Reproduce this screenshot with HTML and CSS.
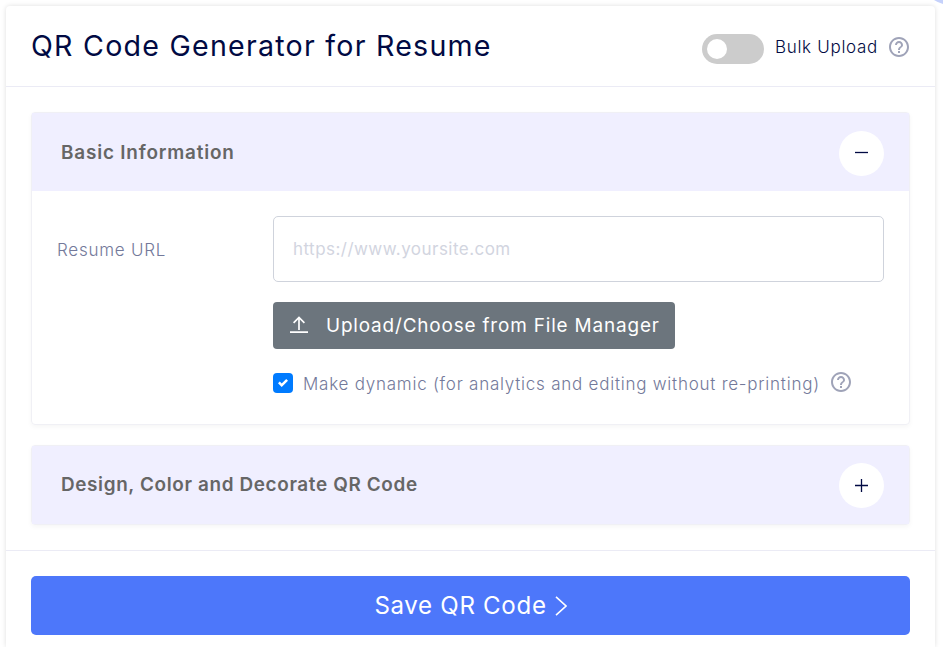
FILE: index.html
```
<!DOCTYPE html>
<html lang="en">
<head>
<meta charset="utf-8">
<title>QR Code Generator for Resume</title>
<link rel="stylesheet" href="styles.css">
</head>
<body>
<svg class="corner" viewBox="0 0 9 4"><path d="M0 0H9V4Q4 2.6 0 0Z" fill="#c5d1fb"/></svg>
<main class="card">
  <header class="card-head">
    <h1 class="title">QR Code Generator for Resume</h1>
    <div class="bulk">
      <span class="toggle"></span>
      <span class="bulk-label">Bulk Upload</span>
      <svg class="help" viewBox="0 0 24 24"><path d="M11 18h2v-2h-2v2zm1-16C6.480 2 2 6.480 2 12s4.480 10 10 10 10-4.480 10-10S17.520 2 12 2zm0 18c-4.410 0-8-3.590-8-8s3.590-8 8-8 8 3.590 8 8-3.590 8-8 8zm0-14c-2.210 0-4 1.790-4 4h2c0-1.100.9-2 2-2s2 .9 2 2c0 2-3 1.750-3 5h2c0-2.250 3-2.500 3-5 0-2.210-1.790-4-4-4z"/></svg>
    </div>
  </header>
  <div class="card-body">
    <section class="panel">
      <div class="panel-head expanded">
        <h2 class="panel-title">Basic Information</h2>
        <span class="round"><svg viewBox="0 0 13 13"><path d="M0 6.500H13"/></svg></span>
      </div>
      <div class="panel-content">
        <label class="field-label" for="url">Resume URL</label>
        <div class="field">
          <input class="input" id="url" type="text" placeholder="https://www.yoursite.com">
          <button class="upload" type="button">
            <svg viewBox="0 0 18 18"><path d="M9 14V2M3.600 6.800L9 1.400L14.400 6.800M0 16.200H18"/></svg>
            <span>Upload/Choose from File Manager</span>
          </button>
          <div class="check-row">
            <span class="checkbox"><svg viewBox="0 0 8 8"><path fill="#fff" d="M6.564.75l-3.590 3.612-1.538-1.550L0 4.260 2.974 7.250 8 2.193z"/></svg></span>
            <span class="check-label">Make dynamic (for analytics and editing without re-printing)</span>
            <svg class="help" viewBox="0 0 24 24"><path d="M11 18h2v-2h-2v2zm1-16C6.480 2 2 6.480 2 12s4.480 10 10 10 10-4.480 10-10S17.520 2 12 2zm0 18c-4.410 0-8-3.590-8-8s3.590-8 8-8 8 3.590 8 8-3.590 8-8 8zm0-14c-2.210 0-4 1.790-4 4h2c0-1.100.9-2 2-2s2 .9 2 2c0 2-3 1.750-3 5h2c0-2.250 3-2.500 3-5 0-2.210-1.790-4-4-4z"/></svg>
          </div>
        </div>
      </div>
    </section>
    <section class="panel">
      <div class="panel-head">
        <h2 class="panel-title long">Design, Color and Decorate QR Code</h2>
        <span class="round"><svg viewBox="0 0 13 13"><path d="M0 6.500H13M6.500 0V13"/></svg></span>
      </div>
    </section>
  </div>
  <footer class="card-foot">
    <button class="save" type="button"><span>Save QR Code</span><svg viewBox="0 0 12 20"><path d="M1 .8L11 10L1 19.200"/></svg></button>
  </footer>
</main>
</body>
</html>
```
FILE: styles.css
```
* { box-sizing: border-box; }
body {
  margin: 0;
  height: 647px;
  overflow: hidden;
  background: #fff;
  color: #010a43;
  font-family: Inter, "Liberation Sans", sans-serif;
  font-size: 17px;
}
h1, h2 { margin: 0; }
.corner { position: absolute; top: 0; right: 0; width: 9px; height: 4px; }
.card {
  margin: 6px 8px 0 6px;
  height: 641px;
  background: #fff;
  border-radius: 4px 4px 0 0;
  box-shadow: 0 0 5px rgba(0, 0, 0, .13);
}
.card-head {
  height: 81px;
  padding: 0 24px 0 25px;
  display: flex;
  justify-content: space-between;
  align-items: center;
  border-bottom: 1px solid #ebebf5;
}
.title { font-size: 28.600px; font-weight: 400; line-height: 40px; letter-spacing: 1.240px; }
.bulk { display: flex; align-items: center; }
.toggle {
  width: 62px;
  height: 30px;
  margin: 5px 11px 0 0;
  padding: 5px;
  border-radius: 15px;
  background: #ccc;
}
.toggle::before {
  content: "";
  display: block;
  width: 20px;
  height: 20px;
  border-radius: 50%;
  background: #fff;
}
.bulk-label { padding-top: 2px; line-height: 24px; letter-spacing: .7px; font-weight: 350; }
.help { flex: none; width: 24px; height: 24px; margin: 2px 0 0 9px; fill: #9fa3b8; }
.card-body { padding: 25px; }
.panel {
  border: 1px solid #f0f0f5;
  border-radius: 4px;
  box-shadow: 0 2px 5px rgba(0, 0, 0, .04);
}
.panel + .panel { margin-top: 20px; }
.panel-head {
  height: 78px;
  padding: 0 25px 0 29px;
  display: flex;
  align-items: center;
  justify-content: space-between;
  background: #f0efff;
}
.panel-head.expanded { padding-top: 2px; }
.panel-title {
  color: #666;
  font-size: 18.900px;
  font-weight: 600;
  line-height: 24px;
  letter-spacing: .82px;
}
.panel-title.long { letter-spacing: .64px; }
.round {
  width: 45px;
  height: 45px;
  display: grid;
  place-items: center;
  border-radius: 50%;
  background: #fff;
}
.round svg { width: 13px; height: 13px; stroke: #010a43; stroke-width: 1.300; }
.expanded .round svg { margin-bottom: 2px; }
.panel-content {
  display: grid;
  grid-template-columns: 216px 1fr;
  height: 233px;
  padding: 25px 25px 0;
}
.field-label { color: #73799a; line-height: 68px; letter-spacing: .75px; font-weight: 350; }
.input {
  display: block;
  width: 100%;
  height: 66px;
  padding: 0 19px;
  border: 1px solid #cfd3dc;
  border-radius: 5px;
  font: inherit;
  letter-spacing: .46px;
}
.input::placeholder { color: #d2d5df; }
.upload {
  display: flex;
  align-items: center;
  width: 402px;
  height: 47px;
  margin-top: 20px;
  padding: 0 17px;
  border: 0;
  border-radius: 4px;
  background: #6c757d;
  color: #fff;
  font: 18.900px Inter, sans-serif;
  letter-spacing: .85px;
  white-space: nowrap;
}
.upload svg { flex: none; width: 18px; height: 18px; margin: 0 18px 2px 0; fill: none; stroke: #fff; stroke-width: 1.700; }
.check-row { display: flex; align-items: center; height: 24px; margin-top: 22px; color: #73799a; white-space: nowrap; }
.check-label { padding-top: 2px; letter-spacing: .76px; font-weight: 350; }
.check-row .help { margin: 0 0 2px 9px; }
.checkbox {
  flex: none;
  width: 20px;
  height: 20px;
  margin-right: 10px;
  display: grid;
  place-items: center;
  border-radius: 4px;
  background: #007bff;
}
.checkbox svg { width: 10px; height: 10px; }
.card-foot { padding: 25px 25px 12px; border-top: 1px solid #ebebf5; }
.save {
  display: flex;
  align-items: center;
  justify-content: center;
  width: 100%;
  height: 59px;
  border: 0;
  border-radius: 5px;
  background: #4d77fa;
  color: #fff;
  font: 24.100px Inter, sans-serif;
  letter-spacing: .68px;
}
.save svg { width: 12px; height: 20px; margin-left: 8px; fill: none; stroke: #fff; stroke-width: 1.600; }
```
